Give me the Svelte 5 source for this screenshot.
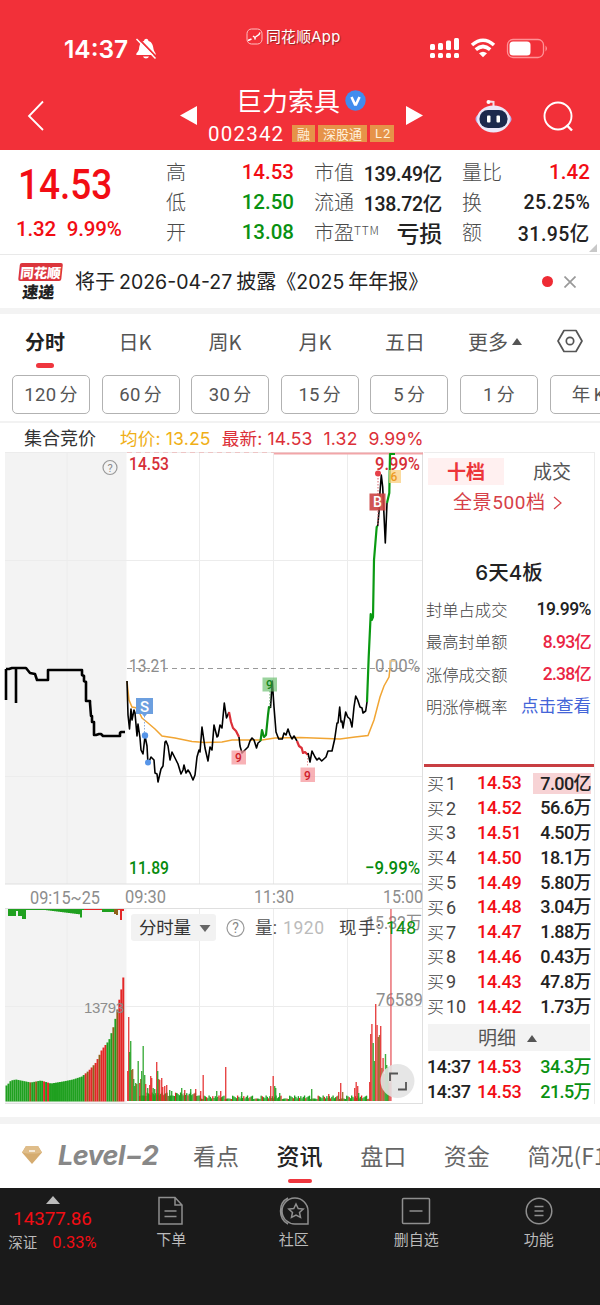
<script>
  const stats = [
    [['高', '14.53', 'up'], ['低', '12.50', 'down'], ['开', '13.08', 'down']],
    [['市值', '139.49亿', ''], ['流通', '138.72亿', ''], ['市盈', '亏损', 'loss']],
    [['量比', '1.42', 'up'], ['换', '25.25%', ''], ['额', '31.95亿', '']]
  ];

  const periods = ['分时', '日K', '周K', '月K', '五日'];
  const minutes = [['120', '分'], ['60', '分'], ['30', '分'], ['15', '分'], ['5', '分'], ['1', '分'], ['年', 'K']];

  const board = [
    ['封单占成交', '19.99%', ''],
    ['最高封单额', '8.93亿', 'rose'],
    ['涨停成交额', '2.38亿', 'rose'],
    ['明涨停概率', '点击查看', 'link']
  ];

  const bids = [
    ['14.53', '7.00亿'], ['14.52', '56.6万'], ['14.51', '4.50万'], ['14.50', '18.1万'],
    ['14.49', '5.80万'], ['14.48', '3.04万'], ['14.47', '1.88万'], ['14.46', '0.43万'],
    ['14.43', '47.8万'], ['14.42', '1.73万']
  ];

  const trades = [['14:37', '14.53', '34.3万'], ['14:37', '14.53', '21.5万']];

  const auction =
    'M6 700V669M6 669H9L12 668H26L30 673L35 674L37 680H48V670H82V675L84 676V681L86 682V701H90V703L91 716H92V722H94V735H96L99 734H101L103 736H120V733L121 732H125M16 668V703';

  const price = [
    ['#000', '127,681 128,715 129.5,729 131,709 132,720 134,710 135,713 137,736 138,724 140,738 141,750 143,754 145,736 147,746 148,764 151,757 154,760 155,773 157,774 158,782 161,769 163,766 165,742 166,741 168,746 170,760 172,752 175,758 178,764 181,774 183,770 184,765 186,773 188,770 190,773 193,780 195,775 197,757 199,750 200,752 202,727 205,748 208,761 210,747 212,750 214,725 217,737 218,736 220,725 222,728 224.3,703 226.5,718 229,712'],
    ['#dc2f38', '229,712 231,722 233,728 236,731 239,737'],
    ['#000', '239,737 240,746 242,753 245,750 248,747 250,741 252,738 254,740 256.5,748 258,743 260.5,741'],
    ['#0a8f12', '260.5,741 262,730 264,737 266,735 268,715 269,707 270.5,708'],
    ['#000', '270.5,708 272.3,681 274,707 276,732 278.7,739 282.3,739 284,733 286,735 288,729 290,735 292,739 294,736 297,741'],
    ['#dc2f38', '297,741 299,746 301.7,748 303,753 305,752 308,755'],
    ['#000', '308,753 310,762 312,751 315,757 317,760 319,758 321.7,761 326,757 328,751 332,751 334.7,739 337,723 338,723 339.7,707 341,722 342,721 343,728 345.7,712 347.7,717 350,719 352,727 354,707 355.7,696 357.7,700 360,707 362,708 363,713 365.7,711 367,702'],
    ['#0a9a12', '367,702 368.7,657 370.7,614 371.7,620 373,617 374,560 376.7,527 377.7,526'],
    ['#000', '377.7,526 379,512 380,492 381.3,475 382.7,487 385.3,543 387,503'],
    ['#0a9a12', '387,503 389.3,493 390,454 395,454']
  ];

  const average =
    'M127 681L129 700L132 707L137 708L142 718L148 723L155 729L162 736L175 738L192 741.5L205 742.5L222 742L232 740L262 740L275 738L300 737.5L340 739L355 737L368 735.5L374 720L380 697L384 686L389 677L390 668';

  const verticals = [67, 199.5, 273.5, 347.5];
  const green = '#1fa01f';
  const red = '#e32626';
  const mixed = '#8f601a';

  // running shape of the call auction volume, [x, height]
  const shape = [[6, 16], [10, 21], [15, 22], [30, 19], [40, 21], [50, 18], [62, 20], [72, 22], [81, 25], [88, 31], [95, 39], [101, 52], [108, 61], [113, 76], [117, 95], [120, 110], [122.3, 124]];

  function heightAt(x) {
    const i = shape.findIndex((p) => p[0] >= x);
    if (i < 0) return 124;
    if (i < 1) return shape[0][1];
    const [x0, h0] = shape[i - 1];
    const [x1, h1] = shape[i];
    return h0 + ((h1 - h0) * (x - x0)) / (x1 - x0);
  }

  const auctionBars = Array.from({ length: 60 }, (_, i) => {
    const x = 5.5 + i * 1.98;
    let color = green;
    if ((x > 86 && x < 105) || x > 115.5) color = red;
    if ([12, 15, 41, 44, 47, 54, 56].includes(i)) color = mixed;
    if ([19, 21, 40, 42].includes(i)) color = red;
    return { x, h: heightAt(x), color };
  });

  const imbalance = Array.from({ length: 58 }, (_, i) => {
    const x = 8 + i * 2;
    let h = 1;
    let color = green;
    if (x < 15) h = 7;
    else if (x < 18) h = 2;
    else if (x < 26) h = x > 20 ? 10 : 7;
    else if (x > 44 && x < 82) h = 1 + (x - 44) / 8 + (x > 78 ? 3 : 0);
    else if (x > 100) h = 3;
    if (x > 82 && x < 101) color = red;
    if (x > 113) {
      color = x < 117 ? mixed : red;
      h = [5, 6, 1, 11, 2, 13][Math.floor((x - 113) / 2)] ?? 2;
    }
    return { x, h, color };
  });

  const spikes = [
    [127, 30, red], [128, 84, red], [129, 49, green], [130, 60, green], [131, 31, mixed], [132, 32, mixed],
    [133, 22, green], [134, 15, green], [135, 18, green], [136, 17, mixed], [137.5, 40, green], [139, 18, red],
    [140, 22, mixed], [141, 30, green], [142.5, 55, green], [144, 26, green], [145, 17, red], [147, 13, green],
    [149, 16, red], [150, 25, red], [151, 23, red], [152.5, 13, green], [154, 12, green], [156, 39, red],
    [157, 30, green], [158, 22, mixed], [159, 21, red], [161, 23, red], [162, 14, red], [164, 15, red],
    [166, 16, red], [169, 11, green], [171, 10, green], [176, 8, green], [181, 13, green], [184, 11, red],
    [190, 12, green], [195, 12, red], [200, 10, red], [202.5, 26, red], [216, 10, green], [220, 10, red],
    [225, 34, red], [241, 9, green], [270, 15, red], [272.5, 25, red], [274, 15, green], [275, 13, green],
    [279, 8, green], [311, 12, green], [328, 7, red], [338, 9, red], [340, 18, red], [342, 9, mixed],
    [354, 13, red], [355.5, 19, red], [357, 15, red], [358, 8, green], [369, 19, red], [370, 67, red],
    [371.2, 77, red], [372.5, 58, green], [373.8, 40, green], [375, 97, red], [376.4, 76, red], [377.6, 64, mixed],
    [378.8, 66, mixed], [380, 75, red], [381.2, 33, mixed], [382.4, 43, red], [383.5, 27, mixed],
    [384.8, 47, green], [386, 36, green], [387, 34, green], [388, 20, mixed], [389.3, 18, red]
  ];

  const noise = Array.from({ length: 186 }, (_, i) => ({
    x: 139 + i * 1.24,
    h: 2 + ((i * 37 + i * i * 11) % 23) / 6 + (i < 50 ? 3 : 0),
    color: [green, red, mixed, green, red][(i * 7 + ((i * i) % 5)) % 5]
  }));
</script>

<main>
  <header>
    <div class="status">
      <div class="clock">
        <span>14:37</span>
        <svg width="22" height="23" viewBox="0 0 22 23">
          <path d="M1.500 18c-1-2 2-3 2.500-6C4.500 7 6 4.500 9 4c.5-3 4-3 4.500 0C17 5 18 8 18.500 12c.5 3 3 4 2 6zM8 19.500h6c-1 2.500-5 2.500-6 0z" fill="#fff" />
          <path d="M3 1L22.500 21" stroke="#f23039" stroke-width="1.800" />
          <path d="M1.500 2L20.500 21.500" stroke="#fff" stroke-width="1.500" />
        </svg>
      </div>
      <div class="app-name">
        <svg width="17" height="17" viewBox="0 0 17 17" fill="none" stroke="#ffc0c2" stroke-width="1">
          <rect x="1" y="1" width="15" height="15" rx="4.500" />
          <path d="M2 12.500l3.500-1.500M7 8l2 1.500v2M9.500 9L13 6.500l1-2" stroke="#fff" stroke-width="1.500" />
        </svg>
        <span>同花顺App</span>
      </div>
      <svg class="signals" width="120" height="24" viewBox="0 0 120 24" fill="#fff">
        <rect x="0" y="8" width="5" height="6" rx="1.500" /><rect x="8" y="7" width="5" height="7" rx="1.500" />
        <rect x="16" y="4.500" width="5" height="9.500" rx="1.500" /><rect x="24" y="2" width="5" height="12" rx="1.500" />
        <rect x="0" y="17" width="5" height="5" rx="1.500" /><rect x="8" y="17" width="5" height="5" rx="1.500" />
        <rect x="16" y="17" width="5" height="5" rx="1.500" /><rect x="24" y="17" width="5" height="5" rx="1.500" />
        <g fill="none" stroke="#fff" stroke-width="3.600">
          <path d="M42 9q11-9.500 22 0" />
          <path d="M45.800 13.700q7.200-6.400 14.400 0" />
        </g>
        <path d="M49 17.300q4-3.200 8 0l-4 4z" />
        <rect x="77.500" y="3.500" width="36" height="18" rx="5.500" fill="none" stroke="#ff9296" stroke-width="1.300" />
        <rect x="79.500" y="5.500" width="21" height="14" rx="3.500" />
        <path d="M115.500 9.500q3 3 0 6z" fill="#ff9296" />
      </svg>
    </div>

    <div class="title-bar">
      <svg class="back" width="18" height="32" viewBox="0 0 18 32" fill="none" stroke="#fff" stroke-width="1.800">
        <path d="M16 1.500L2 16l14 14" />
      </svg>
      <svg class="prev" width="17" height="19" viewBox="0 0 17 19"><path d="M0 9.500L17 0v19z" fill="#fff" /></svg>
      <div class="stock">
        <div class="name">
          <span>巨力索具</span>
          <svg width="21" height="21" viewBox="0 0 21 21">
            <circle cx="10.500" cy="10.500" r="10.200" fill="#418cee" />
            <path d="M6.500 7l3.500 7.500h1L14.500 7" fill="none" stroke="#fff" stroke-width="2.600" />
          </svg>
        </div>
        <div class="code">
          <span class="number">002342</span>
          <span class="tag">融</span>
          <span class="tag">深股通</span>
          <span class="tag latin">L2</span>
        </div>
      </div>
      <svg class="next" width="17" height="19" viewBox="0 0 17 19"><path d="M17 9.500L0 0v19z" fill="#fff" /></svg>
      <svg class="robot" width="37" height="34" viewBox="0 0 37 34">
        <path d="M18.500 8V3l-4-.5" fill="none" stroke="#f4dce6" stroke-width="2" />
        <circle cx="13.500" cy="3" r="2" fill="#fff" />
        <ellipse cx="18.500" cy="20" rx="18" ry="9" fill="#b9b4ea" />
        <ellipse cx="18.500" cy="20" rx="16.500" ry="13.500" fill="#ece8f9" />
        <rect x="4.500" y="11" width="28" height="18" rx="8.500" fill="#1d294d" />
        <rect x="12" y="16.500" width="3.500" height="7" rx="1" fill="#fff" />
        <rect x="21.500" y="16.500" width="3.500" height="7" rx="1" fill="#fff" />
      </svg>
      <svg class="search" width="31" height="32" viewBox="0 0 31 32" fill="none" stroke="#fff" stroke-width="1.900">
        <circle cx="15" cy="15" r="13.500" />
        <path d="M23.500 24l5.500 5.500" stroke-width="2.400" />
      </svg>
    </div>
  </header>

  <section class="quote">
    <div class="last">
      <div class="big">14.53</div>
      <div class="change"><span>1.32</span><span>9.99%</span></div>
    </div>
    {#each stats as column, i}
      <div class="stats stats-{i}">
        {#each column as [label, value, tone]}
          <div class="stat">
            <span class="label">{label}{#if label === '市盈'}<sup>TTM</sup>{/if}</span>
            <span class="value {tone}">{value}</span>
          </div>
        {/each}
      </div>
    {/each}
    <i class="corner"></i>
  </section>

  <section class="news">
    <div class="badge">
      <span class="brand">同花顺</span>
      <span class="express">速递</span>
    </div>
    <p>将于<span class="date">2026-04-27</span>披露《<span class="year">2025</span>年年报》</p>
    <i class="dot"></i>
    <svg width="12" height="12" viewBox="0 0 12 12" stroke="#999" stroke-width="1.700"><path d="M.5.5l11 11M11.500.5l-11 11" /></svg>
  </section>

  <nav class="periods">
    {#each periods as period, i}
      <span class="period" class:active={i === 0}>{period}</span>
    {/each}
    <span class="period more">更多<i></i></span>
    <svg width="26" height="24" viewBox="0 0 26 24" fill="none" stroke="#555" stroke-width="1.700">
      <path d="M7 1.500h12L25 12l-6 10.500H7L1 12z" stroke-linejoin="round" />
      <circle cx="13" cy="12" r="3.700" />
    </svg>
  </nav>

  <nav class="minutes">
    {#each minutes as [count, unit]}
      <span>{count}<em>{unit}</em></span>
    {/each}
  </nav>

  <div class="legend">
    <span class="auction">集合竞价</span>
    <span class="mean">均价: 13.25</span>
    <span class="latest">最新: 14.53</span>
    <span class="latest">1.32</span>
    <span class="latest">9.99%</span>
  </div>

  <section class="market">
    <svg class="chart" width="424" height="654" viewBox="0 452 424 654">
      <rect x="5" y="452" width="121.500" height="432" fill="#f3f3f3" />
      <rect x="5" y="909" width="121.500" height="194" fill="#f3f3f3" />
      <g stroke="#ececec" stroke-width="1">
        {#each verticals as x}
          <path d="M{x} 452V884M{x} 909V1103" />
        {/each}
        <path d="M5 452.500H423M5 560.500H423M5 776.500H423M5 1006.500H423" />
        <path d="M5 884H423M5 908.500H423M5 1103.500H423M422.500 452V1103" stroke="#dfdfdf" />
      </g>
      <path d="M127 452.500H274" stroke="#edc5c5" stroke-dasharray="5 4" />
      <path d="M274 453.500H423" stroke="#f2a5a8" stroke-width="2" />
      <path d="M127 668.500H422" stroke="#999" stroke-dasharray="5 4" />

      <g class="axis">
        <text x="129" y="470" textLength="40" lengthAdjust="spacingAndGlyphs" class="r">14.53</text>
        <text x="375" y="470" textLength="45" lengthAdjust="spacingAndGlyphs" class="r">9.99%</text>
        <text x="129" y="672" textLength="39" lengthAdjust="spacingAndGlyphs" class="g">13.21</text>
        <text x="375" y="672" textLength="45" lengthAdjust="spacingAndGlyphs" class="g">0.00%</text>
        <text x="129" y="874" textLength="40" lengthAdjust="spacingAndGlyphs" class="d">11.89</text>
        <text x="365" y="874" textLength="55" lengthAdjust="spacingAndGlyphs" class="d">−9.99%</text>
        <text x="30" y="904" textLength="70" lengthAdjust="spacingAndGlyphs" class="g">09:15~25</text>
        <text x="125" y="903" textLength="41" lengthAdjust="spacingAndGlyphs" class="g">09:30</text>
        <text x="254" y="903" textLength="40" lengthAdjust="spacingAndGlyphs" class="g">11:30</text>
        <text x="383" y="903" textLength="40" lengthAdjust="spacingAndGlyphs" class="g">15:00</text>
      </g>

      <path d={auction} fill="none" stroke="#000" stroke-width="2.600" stroke-linejoin="round" />
      <path d={average} fill="none" stroke="#f1a533" stroke-width="1.500" />
      <path d="M390 668v-7h6" fill="none" stroke="#ecc88b" stroke-width="1.500" />
      {#each price as [color, points]}
        <polyline {points} fill="none" stroke={color} stroke-width={color === '#000' ? 1.6 : 2.2} stroke-linejoin="round" />
      {/each}

      <g class="marks">
        <path d="M144.500 716V735" stroke="#8daedd" stroke-dasharray="1.500 1.500" />
        <path d="M136 698h17v16h-6l-2.500 3-2.500-3h-6z" fill="#6c9fdf" />
        <text x="144.500" y="712" fill="#fff" font-size="15">S</text>
        <circle cx="145" cy="735.500" r="3.200" fill="#5795e8" />
        <circle cx="148" cy="762.500" r="3" fill="#5795e8" />
        <path d="M270 691V708" stroke="#4c9e50" stroke-dasharray="1.500 1.500" />
        <rect x="262.500" y="677.500" width="14.500" height="14" fill="#64bc68" opacity=".65" />
        <text x="269.500" y="689" fill="#15851b">9</text>
        <rect x="231.500" y="750.500" width="14.500" height="14" fill="#f5989d" opacity=".75" />
        <text x="238.500" y="762" fill="#cf202c">9</text>
        <path d="M307.500 755V767" stroke="#e99" stroke-dasharray="1.500 1.500" />
        <rect x="300.500" y="767.500" width="14.500" height="14.500" fill="#f5989d" opacity=".75" />
        <text x="307.500" y="780" fill="#cf202c">9</text>
        <path d="M378 478V526" stroke="#d9626a" stroke-dasharray="1.500 1.500" />
        <circle cx="378" cy="473.500" r="3" fill="#e64049" />
        <rect x="369.500" y="493.500" width="16" height="17" fill="#cc4341" opacity=".9" />
        <text x="377.500" y="507" fill="#fff" font-size="14">B</text>
        <rect x="389" y="470" width="12" height="13" fill="#f9cf7f" opacity=".75" />
        <text x="394" y="481" fill="#ed9a22">6</text>
      </g>

      <g fill="none" stroke="#999" stroke-width="1.200">
        <circle cx="110" cy="467.500" r="7" />
        <circle cx="235.500" cy="928" r="8.500" />
      </g>
      <text x="110" y="471.500" class="ask" font-size="11">?</text>
      <text x="235.500" y="933" class="ask" font-size="14">?</text>

      {#each imbalance as bar}
        <rect x={bar.x} y="909" width="2" height={bar.h} fill={bar.color} />
      {/each}
      {#each auctionBars as bar}
        <rect x={bar.x} y={1101.5 - bar.h} width="1.980" height={bar.h} fill={bar.color} />
      {/each}
      {#each noise as bar}
        <rect x={bar.x} y={1101 - bar.h} width="1.300" height={bar.h} fill={bar.color} />
      {/each}
      {#each spikes as [x, h, color]}
        <rect {x} y={1101 - h} width="1.400" height={h} fill={color} opacity=".85" />
      {/each}

      <g class="axis">
        <text x="84" y="1013" textLength="40" class="g plain">13793</text>
        <text x="376" y="1006" textLength="47" lengthAdjust="spacingAndGlyphs" class="g">76589</text>
        <text x="366" y="929" textLength="56" lengthAdjust="spacingAndGlyphs" class="g">15.32万</text>
      </g>
      <rect x="390.300" y="909" width="1.300" height="192" fill="#e75a60" />

      <rect x="131" y="914" width="85" height="27" rx="3" fill="#f2f2f2" />
      <path d="M199.500 925h11l-5.500 7z" fill="#666" />
      <g class="panel-text">
        <text x="139" y="934" textLength="52" fill="#333">分时量</text>
        <text x="255" y="934" textLength="22" fill="#555">量:</text>
        <text x="283" y="934" textLength="41" fill="#bbb">1920</text>
        <text x="339" y="934" textLength="42" fill="#444">现手:</text>
        <text x="386" y="934" textLength="30" fill="#0a9010">148</text>
      </g>
      <circle cx="397.500" cy="1081" r="17" fill="#e3e3e3" opacity=".88" />
      <path d="M390 1081v-7.500h8M398 1089.500h8V1082" fill="none" stroke="#555" stroke-width="1.800" />
    </svg>

    <aside>
      <div class="depth-tabs"><span class="selected">十档</span><span>成交</span></div>
      <div class="panorama">
        全景500档
        <svg width="9" height="14" viewBox="0 0 9 14" fill="none" stroke="#d64048" stroke-width="1.200"><path d="M1 1l7 6-7 6" /></svg>
      </div>
      <h3>6天4板</h3>
      <div class="board">
        {#each board as [label, value, tone]}
          <div><span>{label}</span><b class={tone}>{value}</b></div>
        {/each}
      </div>
      <div class="bids">
        {#each bids as [bid, size], i}
          <div class="bid">
            <span>买<em>{i + 1}</em></span>
            <b class="up">{bid}</b>
            <b class="size" class:flash={i === 0}>{size}</b>
          </div>
        {/each}
      </div>
      <div class="detail">明细<i></i></div>
      {#each trades as [time, deal, size]}
        <div class="trade"><b>{time}</b><b class="up">{deal}</b><b class="size down">{size}</b></div>
      {/each}
    </aside>
  </section>

  <nav class="topics">
    <svg width="20" height="18" viewBox="0 0 20 18">
      <path d="M4 0h12l4 6.500L10 18 0 6.500z" fill="#d5ac70" />
      <path d="M0 6.500L4 0h12l4 6.500-5 1H5z" fill="#dfbd8a" />
      <path d="M7 5h6" stroke="#fff" stroke-width="1.300" />
    </svg>
    <span class="level">Level−2</span>
    <span>看点</span>
    <span class="active">资讯</span>
    <span>盘口</span>
    <span>资金</span>
    <span class="brief">简况(F10)</span>
  </nav>

  <footer>
    <div class="index">
      <i></i>
      <b>14377.86</b>
      <div><span>深证</span><b>0.33%</b></div>
    </div>
    <div class="action order">
      <svg width="30" height="30" viewBox="0 0 30 30">
        <path d="M3 1.500h16l7 7.500v19H3zM19 1.500V9h7M8.500 15h12M8.500 20.500h12" />
      </svg>
      <span>下单</span>
    </div>
    <div class="action community">
      <svg width="30" height="30" viewBox="0 0 30 30">
        <path d="M29 28H17A13 13 0 1 1 29 15zM9 2C-1 7-1 23 9 28" />
        <path d="M17 8l2.200 4.500 5 .6-3.700 3.400 1 4.900L17 19l-4.500 2.400 1-4.900-3.700-3.400 5-.6z" />
      </svg>
      <span>社区</span>
    </div>
    <div class="action remove">
      <svg width="30" height="30" viewBox="0 0 30 30">
        <rect x="1.500" y="2.500" width="27" height="25" rx="1" />
        <path d="M8.500 15h13" />
      </svg>
      <span>删自选</span>
    </div>
    <div class="action tools">
      <svg width="30" height="30" viewBox="0 0 30 30">
        <circle cx="15" cy="15" r="12.800" />
        <path d="M10.500 10.500h9M10.500 15h9M10.500 19.500h9" />
      </svg>
      <span>功能</span>
    </div>
  </footer>
</main>

<style>
  :global(body) {
    background: #fff;
  }
  main {
    color: #222;
    font-family: 'Noto Sans CJK SC', sans-serif;
    height: 1305px;
    line-height: 1;
    overflow: hidden;
    width: 600px;
  }
  main * {
    box-sizing: border-box;
  }
  svg {
    display: block;
    flex: none;
  }
  b {
    font-family: Roboto, 'Noto Sans CJK SC', sans-serif;
    font-weight: 500;
  }
  em {
    font-style: normal;
  }
  .up {
    color: #f20d14;
  }
  .down {
    color: #099111;
  }
  header {
    background: #f23039;
    color: #fff;
    height: 150px;
  }
  .status {
    display: flex;
    height: 78px;
    padding: 36px 50px 0 64px;
  }
  .clock {
    display: flex;
    font: 600 24.5px/27px Inter, sans-serif;
    gap: 6px;
    width: 182px;
  }
  .clock span {
    width: 65px;
  }
  .clock svg {
    margin-top: 1px;
  }
  .app-name {
    display: flex;
    font-family: Inter, 'Noto Sans CJK SC', sans-serif;
    font-size: 14.8px;
    gap: 3px;
    margin-top: -8px;
    width: 184px;
  }
  .app-name span {
    letter-spacing: 0.3px;
    line-height: 19px;
    text-shadow: 1px 1px 1px #8a2929;
  }
  .signals {
    margin-top: 0;
  }
  .title-bar {
    display: flex;
    height: 72px;
    padding-left: 27px;
  }
  .back {
    margin-top: 22px;
  }
  .prev {
    margin: 28px 0 0 135px;
  }
  .stock {
    margin-left: 11px;
    width: 187px;
  }
  .name {
    align-items: center;
    display: flex;
    font-size: 26px;
    gap: 5px;
    height: 44px;
    padding-left: 28px;
  }
  .code {
    align-items: center;
    display: flex;
    gap: 3px;
    height: 23px;
  }
  .number {
    font: 400 20.5px Roboto, sans-serif;
    letter-spacing: 1.2px;
    margin-right: 5px;
    width: 76px;
  }
  .tag {
    background: #e69349;
    color: #fff1dc;
    font-size: 13px;
    height: 17px;
    line-height: 17px;
    padding: 0 5px;
    white-space: nowrap;
  }
  .latin {
    font-family: Roboto, sans-serif;
    letter-spacing: 1px;
    padding-right: 3px;
  }
  .next {
    margin: 28px 0 0 11px;
  }
  .robot {
    margin: 21px 0 0 52px;
  }
  .search {
    margin: 23px 0 0 31px;
  }

  .quote {
    border-bottom: 1px solid #e9e9e9;
    display: flex;
    height: 105px;
    padding-top: 7px;
    position: relative;
  }
  .last {
    color: #f20d14;
    font-family: Roboto, sans-serif;
    font-weight: 500;
    padding-left: 18px;
    width: 166px;
  }
  .big {
    font-size: 43px;
    line-height: 55px;
    transform: scaleX(0.86);
    transform-origin: left;
  }
  .change {
    display: flex;
    font-size: 20.5px;
    gap: 11px;
    letter-spacing: -0.2px;
    line-height: 35px;
    margin-left: -2px;
  }
  .stats {
    display: grid;
    grid-template-rows: repeat(3, 30px);
  }
  .stats-0 {
    width: 128px;
  }
  .stats-1 {
    margin-left: 20px;
    width: 128px;
  }
  .stats-2 {
    margin-left: 20px;
    width: 128px;
  }
  .stat {
    align-items: center;
    display: flex;
    justify-content: space-between;
    white-space: nowrap;
  }
  .label {
    color: #4a4a4a;
    font-size: 20px;
    font-weight: 300;
  }
  .label sup {
    font-size: 12px;
    letter-spacing: 0.8px;
    vertical-align: 5px;
  }
  .value {
    font: 500 20.5px Roboto, 'Noto Sans CJK SC', sans-serif;
  }
  .stats-1 .value {
    font-size: 19.5px;
    letter-spacing: -0.3px;
  }
  .stats-2 .value {
    letter-spacing: 0.1px;
  }
  .stats-2 .stat:nth-child(n + 2) .value {
    letter-spacing: 0.5px;
    transform: scaleX(0.95);
    transform-origin: right;
  }
  .stats-1 .loss {
    font-size: 23px;
  }
  .corner {
    border: 4px solid transparent;
    border-bottom-color: #c8c8c8;
    border-right-color: #c8c8c8;
    bottom: 2px;
    position: absolute;
    right: 3px;
  }

  .news {
    align-items: center;
    border-bottom: 6px solid #f3f3f3;
    display: flex;
    height: 59px;
    padding-left: 18px;
  }
  .badge {
    display: flex;
    flex-direction: column;
    font-size: 13.5px;
    font-weight: 900;
    height: 38px;
    text-align: center;
    transform: skewX(-6deg);
    width: 43px;
  }
  .brand {
    background: #dc353c;
    border-radius: 2px;
    color: #fff;
    line-height: 18px;
  }
  .express {
    font-size: 16px;
    line-height: 20px;
  }
  .news p {
    font-size: 20px;
    margin: 0 0 0 14px;
    white-space: nowrap;
    width: 467px;
  }
  .date,
  .year {
    font-family: Inter, sans-serif;
    font-size: 19.5px;
    margin: 0 4px;
  }
  .year {
    margin: 0 4px 0 0;
  }
  .dot {
    background: #ee2b34;
    border-radius: 50%;
    height: 11px;
    margin-right: 11px;
    width: 11px;
  }

  .periods {
    color: #555;
    display: flex;
    font-size: 20px;
    font-weight: 400;
    height: 61px;
    padding-top: 16px;
  }
  .period {
    line-height: 24px;
    text-align: center;
    width: 90px;
  }
  .active {
    color: #222;
    font-weight: 700;
  }
  .active::after {
    background: #ef363e;
    border-radius: 3px;
    content: '';
    display: block;
    height: 5px;
    margin: 9px auto 0;
    width: 18px;
  }
  .more {
    margin-right: 17px;
  }
  .more i,
  .detail i {
    border: 5px solid transparent;
    border-bottom: 7px solid #555;
    border-top: 0;
    display: inline-block;
    margin: 0 0 5px 4px;
  }
  .periods svg {
    margin-top: -1px;
  }
  .minutes {
    border-bottom: 2px solid #f2f2f2;
    display: flex;
    gap: 11.6px;
    height: 48px;
    overflow: hidden;
    padding-left: 12px;
  }
  .minutes span {
    border: 1px solid #b2b2b2;
    border-radius: 5px;
    color: #555;
    flex: none;
    font-family: Roboto, 'Noto Sans CJK SC', sans-serif;
    font-size: 18.5px;
    height: 39px;
    letter-spacing: 0.3px;
    line-height: 38px;
    text-align: center;
    width: 78px;
  }
  .minutes em {
    font-size: 18px;
    margin-left: 3px;
  }
  .legend {
    color: #dc3038;
    display: flex;
    font-family: Inter, 'Noto Sans CJK SC', sans-serif;
    font-size: 17.6px;
    height: 29px;
    letter-spacing: 0.15px;
    line-height: 31px;
    padding-left: 24px;
    white-space: nowrap;
  }
  .legend span {
    margin-right: 11px;
  }
  .legend .auction {
    color: #333;
    font-size: 18px;
    letter-spacing: 0;
    margin-right: 24px;
  }
  .legend .mean {
    color: #f0af16;
  }

  .market {
    display: flex;
    height: 665px;
  }
  .axis {
    font: 400 18.5px Roboto, 'Noto Sans CJK SC', sans-serif;
  }
  .r {
    fill: #d62f38;
    font-weight: 500;
  }
  .g {
    fill: #8d8d8d;
  }
  .d {
    fill: #078b0e;
    font-weight: 500;
  }
  .plain {
    font-family: 'Liberation Sans', sans-serif;
    font-size: 15px;
  }
  .marks {
    font-family: Roboto, sans-serif;
    font-size: 12px;
    font-weight: 500;
    text-anchor: middle;
  }
  .ask {
    fill: #888;
    font-family: Roboto, sans-serif;
    text-anchor: middle;
  }
  .panel-text {
    font-family: Roboto, 'Noto Sans CJK SC', sans-serif;
    font-size: 17.5px;
  }
  aside {
    border-right: 1px solid #ececec;
    border-top: 1px solid #ececec;
    height: 652px;
    padding-top: 5px;
    width: 171px;
  }
  .depth-tabs {
    display: flex;
    font-size: 19px;
    height: 27px;
    line-height: 26px;
    padding-left: 4px;
    text-align: center;
  }
  .depth-tabs span {
    color: #555;
    margin-left: 10px;
    width: 76px;
  }
  .depth-tabs .selected {
    background: #fff0f0;
    color: #ec353a;
    font-weight: 700;
    margin: 0;
  }
  .panorama {
    align-items: center;
    color: #d64048;
    display: flex;
    font-family: Roboto, 'Noto Sans CJK SC', sans-serif;
    font-size: 19px;
    gap: 7px;
    height: 35px;
    letter-spacing: 0.6px;
    padding-left: 29px;
    white-space: nowrap;
  }
  h3 {
    font-family: Inter, 'Noto Sans CJK SC', sans-serif;
    font-size: 20.5px;
    font-weight: 500;
    height: 74px;
    line-height: 106px;
    margin: 0;
    text-align: center;
  }
  .board {
    border-bottom: 3px solid #c83e42;
    height: 173px;
  }
  .board div {
    align-items: center;
    display: flex;
    font-size: 16.3px;
    height: 32.3px;
    justify-content: space-between;
    padding: 0 3px 0 2px;
    white-space: nowrap;
  }
  .board span {
    color: #444;
    font-weight: 300;
    line-height: 17px;
    margin-top: -1px;
  }
  .board b {
    font-size: 17.5px;
    letter-spacing: -0.2px;
  }
  .board div:first-child b {
    letter-spacing: -0.5px;
  }
  .board .rose {
    color: #ea2443;
    letter-spacing: -0.8px;
  }
  .board .link {
    color: #4465d8;
    font-weight: 400;
    letter-spacing: 0;
  }
  .bids {
    height: 257px;
    padding-top: 4px;
  }
  .bid,
  .trade {
    align-items: center;
    display: flex;
    font-size: 18px;
    height: 24.8px;
    padding: 0 3px 0 3px;
    white-space: nowrap;
  }
  .bid span {
    color: #444;
    font-size: 17px;
    font-weight: 300;
    width: 50px;
  }
  .bid em {
    font: 400 18px Roboto, sans-serif;
    margin-left: 2px;
  }
  .bid .up,
  .trade .up {
    letter-spacing: -0.3px;
    width: 56px;
  }
  .size {
    flex: 1;
    letter-spacing: -0.6px;
    text-align: right;
  }
  .flash {
    background: #f7d3d5;
    height: 21px;
    line-height: 21px;
  }
  .detail {
    background: #f3f3f3;
    color: #555;
    font-size: 19px;
    height: 27px;
    line-height: 25px;
    margin: 0 4px 4px;
    padding-left: 50px;
  }
  .detail i {
    margin-left: 11px;
    margin-bottom: 3px;
  }
  .trade {
    letter-spacing: -0.4px;
  }
  .trade b:first-child {
    width: 50px;
  }

  .topics {
    border-top: 7px solid #f3f3f3;
    color: #666;
    display: flex;
    font-size: 23px;
    font-weight: 400;
    height: 71px;
    padding: 19px 0 0 22px;
    white-space: nowrap;
  }
  .topics svg {
    margin-top: 3px;
  }
  .topics span {
    line-height: 25px;
    margin-left: 37px;
    width: 46.6px;
  }
  .topics .level {
    color: #888;
    font: italic 700 27px/26px Inter, sans-serif;
    letter-spacing: -0.6px;
    margin-left: 16px;
    width: 98px;
  }
  .topics .active {
    font-weight: 500;
  }
  .topics .active::after {
    height: 4px;
    margin-top: 11px;
    width: 24px;
  }

  footer {
    background: #1a1a1a;
    color: #bbb;
    display: flex;
    height: 117px;
    padding-top: 8px;
  }
  .index {
    align-items: center;
    display: flex;
    flex-direction: column;
    width: 105px;
  }
  .index > i {
    border: 7px solid transparent;
    border-bottom: 8px solid #bbb;
    border-top: 0;
  }
  .index b {
    color: #f20d14;
    font-size: 18.8px;
    font-weight: 400;
    line-height: 30px;
  }
  .index div {
    align-items: center;
    display: flex;
    font-size: 14.5px;
    gap: 15px;
    height: 17px;
  }
  .index div b {
    font-size: 16.5px;
  }
  .action {
    align-items: center;
    display: flex;
    flex-direction: column;
    font-size: 15px;
    gap: 5px;
    width: 122.5px;
  }
  .action svg {
    fill: none;
    stroke: #8f8f8f;
    stroke-width: 1.5;
  }
  .action:nth-child(2) {
    margin-left: 5px;
  }
</style>
